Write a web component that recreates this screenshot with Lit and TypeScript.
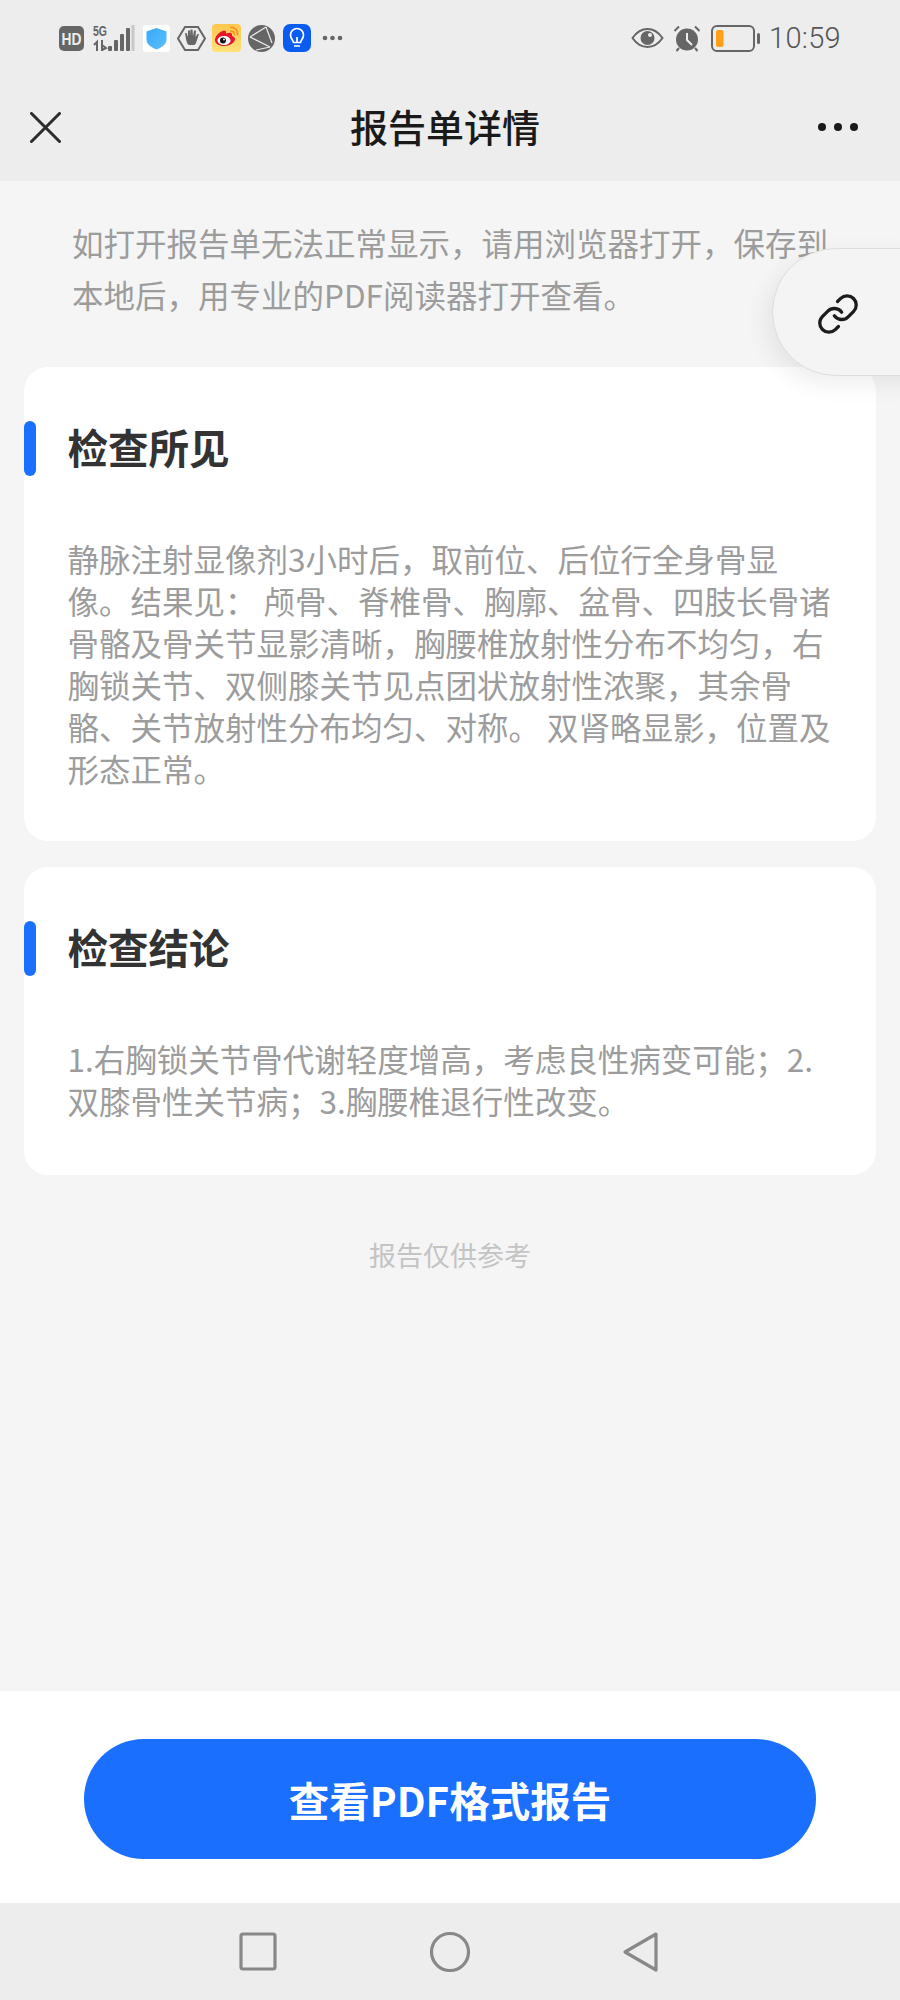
import { LitElement, html, css } from "lit";
import { customElement } from "lit/decorators.js";

const G = "#666";

@customElement("app-root")
export class AppRoot extends LitElement {
  static styles = css`
    :host { display: block; width: 900px; height: 2000px; font-family: "Noto Sans CJK SC", "Noto Sans", sans-serif; }
    .page { position: relative; width: 900px; height: 2000px; display: flex; flex-direction: column; background: #f5f5f5; overflow: hidden; }
    .top { background: #ededed; height: 181px; flex: none; display: flex; flex-direction: column; }
    .status { height: 76px; display: flex; align-items: center; padding: 0 59px 0 59px; }
    .status svg { display: block; flex: none; overflow: visible; }
    .left { display: flex; align-items: center; }
    .right { margin-left: auto; display: flex; align-items: center; }
    .time { font-family: Roboto, sans-serif; font-weight: 300; font-size: 29px; color: #555; margin-left: 9px; line-height: 1; letter-spacing: 0.3px; }
    .bar { flex: 1; display: flex; align-items: center; justify-content: space-between; padding: 0 42px 0 30px; position: relative; margin-top: -3px; }
    .title { position: absolute; left: 0; right: 10px; top: 34px; text-align: center; font-size: 38px; font-weight: 500; color: #1a1a1a; line-height: 1; }
    .bar svg { display: block; }
    .main { flex: 1; display: flex; flex-direction: column; padding: 0 24px; }
    .notice { margin: 35px 0 0; padding: 0 40px 0 48px; font-size: 31.5px; line-height: 52px; color: #9c9c9c; }
    .card { background: #fff; border-radius: 24px; padding: 54px 40.500px 0 43.500px; margin-top: 47px; position: relative; }
    .card + .card { margin-top: 26px; }
    .mark { position: absolute; left: 0; top: 54px; width: 12px; height: 55px; border-radius: 6px; background: #1a6fff; }
    .card h2 { margin: 0; font-size: 40.5px; font-weight: 700; line-height: 52px; color: #333; }
    .card p { margin: 0; font-size: 31.5px; line-height: 42px; color: #9c9c9c; }
    .c1 p { padding: 64px 0 52px; }
    .c2 p { padding: 64px 0 54px; }
    .ref { text-align: center; font-size: 27px; line-height: 36px; color: #c4c4c4; margin-top: 62px; }
    .foot { flex: none; height: 212px; background: #fff; display: flex; align-items: center; justify-content: center; }
    .btn { width: 732px; height: 120px; border-radius: 60px; background: #1a6fff; color: #fff; font-size: 40.5px; font-weight: 700; display: flex; align-items: center; justify-content: center; margin-top: 4px; }
    .nav { flex: none; height: 97px; background: #ededed; display: flex; align-items: center; justify-content: center; padding-left: 10px; }
    .nav svg { display: block; }
    .float { position: absolute; left: 772px; top: 248px; width: 200px; height: 128px; box-sizing: border-box; border-radius: 64px; background: #f4f4f4; border: 1.5px solid #ddd; box-shadow: -6px 8px 24px rgba(0,0,0,.07); display: flex; align-items: center; padding: 4px 0 0 42.500px; }
  `;

  icons() {
    return html`
      <div class="left">
        <svg width="25" height="25" viewBox="0 0 25 25"><rect width="25" height="25" rx="5" fill="${G}"/><text x="2.500" y="18.500" font-family="Liberation Sans" font-weight="700" font-size="17" fill="#ededed" textLength="20" lengthAdjust="spacingAndGlyphs">HD</text></svg>
        <svg style="margin-left:9px" width="42" height="28" viewBox="0 0 42 28"><text x="0" y="12" font-family="Liberation Sans" font-weight="700" font-size="15" fill="${G}" textLength="14" lengthAdjust="spacingAndGlyphs">5G</text><path d="M1 21l3-3v9M4 18v9" stroke="${G}" stroke-width="2" fill="none"/><path d="M9 16v11M9 21l4 3-4 2" stroke="${G}" stroke-width="2" fill="none"/><rect x="15" y="22" width="4" height="5" rx="1" fill="${G}"/><rect x="21" y="16" width="4" height="11" rx="1" fill="${G}"/><rect x="27" y="10" width="4" height="17" rx="1" fill="${G}"/><rect x="33" y="4" width="4" height="23" rx="1" fill="${G}"/><rect x="38.500" y="1" width="3" height="26" fill="#c8c8c8"/></svg>
        <svg style="margin-left:8px" width="27" height="27" viewBox="0 0 27 27"><defs><linearGradient id="sh" x1="0" y1="0" x2="1" y2="1"><stop offset="0" stop-color="#36a8f8"/><stop offset="1" stop-color="#5cc0fb"/></linearGradient></defs><rect width="27" height="27" rx="3" fill="#fff"/><path d="M13.500 3l10 3.500v8c0 5-5 8-10 10-5-2-10-5-10-10v-8z" fill="url(#sh)"/></svg>
        <svg style="margin-left:7px" width="29" height="27" viewBox="0 0 29 27"><path d="M8 2h13l7 11.500-7 11.500H8L1 13.500z" fill="none" stroke="${G}" stroke-width="2"/><path d="M9 14l-1-6h1.500l1.500 4V5.500h2V11l.5-6.500h2L16 11l1-5.500h2L18.500 12l2-3h1.500l-3 9c-.5 1.500-1.500 2-3 2h-3c-2 0-3-1-4-6z" fill="${G}"/></svg>
        <svg style="margin-left:6px" width="29" height="28" viewBox="0 0 29 28"><defs><linearGradient id="wb" x1="0" y1="0" x2="0" y2="1"><stop offset="0" stop-color="#ffc64d"/><stop offset="1" stop-color="#ffe27a"/></linearGradient></defs><rect width="29" height="28" rx="4" fill="url(#wb)"/><path d="M3 16c0-4 5-9 9-9.500 2 0 2.500 1.500 2 3 3-1 6-1 6 1 0 1 0 1.500 0 1.500 2 .5 3 1.500 3 3 0 3.500-5 7-11 7-5.500 0-9-2.500-9-6z" fill="#e6162d"/><ellipse cx="12" cy="16.500" rx="6.500" ry="4.500" fill="#fff"/><circle cx="11" cy="16.500" r="3" fill="#111"/><circle cx="12" cy="15.500" r=".9" fill="#fff"/><path d="M18 7c3-.5 5 1.500 4.500 4.500M18 3.500c5-.8 8.500 3 7.500 8" fill="none" stroke="#f7921e" stroke-width="1.500"/></svg>
        <svg style="margin-left:7px" width="27" height="27" viewBox="0 0 27 27"><circle cx="13.500" cy="13.500" r="13.500" fill="${G}"/><path d="M2 12L18 2M18 2l6 16M2 12l20 10M8 25l14-3" fill="none" stroke="#ededed" stroke-width="1.200"/></svg>
        <svg style="margin-left:8px" width="28" height="28" viewBox="0 0 28 28"><rect width="28" height="28" rx="7" fill="#0a5cf0"/><path d="M10.500 18.500c0-2-3-3.500-3-7.500a6.500 6.500 0 0 1 13 0c0 4-3 5.500-3 7.500zM11 22h6M14 18v-5" fill="none" stroke="#fff" stroke-width="1.700"/></svg>
        <svg style="margin-left:11px" width="21" height="6" viewBox="0 0 21 6"><circle cx="3" cy="3" r="2.300" fill="${G}"/><circle cx="10.500" cy="3" r="2.300" fill="${G}"/><circle cx="18" cy="3" r="2.300" fill="${G}"/></svg>
      </div>
      <div class="right">
        <svg width="33" height="22" viewBox="0 0 33 22"><path d="M1.500 11C6 4.500 11 2 16.500 2S27 4.500 31.500 11C27 17.500 22 20 16.500 20S6 17.500 1.500 11z" fill="none" stroke="${G}" stroke-width="2"/><circle cx="16.500" cy="11" r="7" fill="${G}"/><circle cx="19" cy="8" r="2" fill="#ededed"/></svg>
        <svg style="margin-left:9px" width="28" height="27" viewBox="0 0 28 27"><circle cx="14" cy="14.500" r="11" fill="${G}"/><path d="M14 8v7l5 5" fill="none" stroke="#ededed" stroke-width="2"/><path d="M1.500 6L6 1.500M26.500 6L22 1.500M6 23l-2.500 3M22 23l2.500 3" stroke="${G}" stroke-width="2"/></svg>
        <svg style="margin-left:10px" width="49" height="27" viewBox="0 0 49 27"><rect x="1" y="1" width="42" height="25" rx="5" fill="none" stroke="${G}" stroke-width="2"/><rect x="5" y="5" width="7.500" height="17" rx="2" fill="#ff9f1a"/><rect x="46" y="8" width="3" height="11" rx="1.500" fill="${G}"/></svg>
        <span class="time">10:59</span>
      </div>`;
  }

  render() {
    return html`
      <div class="page">
        <div class="top">
          <div class="status">${this.icons()}</div>
          <div class="bar">
            <span class="title">报告单详情</span>
            <svg width="31" height="31" viewBox="0 0 31 31"><path d="M1.500 1.500l28 28M29.500 1.500l-28 28" stroke="#2b2b2b" stroke-width="3" stroke-linecap="round"/></svg>
            <svg width="40" height="8" viewBox="0 0 40 8"><circle cx="4" cy="4" r="4" fill="#1a1a1a"/><circle cx="20" cy="4" r="4" fill="#1a1a1a"/><circle cx="36" cy="4" r="4" fill="#1a1a1a"/></svg>
          </div>
        </div>
        <div class="main">
          <div class="notice">如打开报告单无法正常显示，请用浏览器打开，保存到本地后，用专业的PDF阅读器打开查看。</div>
          <section class="card c1">
            <i class="mark"></i>
            <h2>检查所见</h2>
            <p>静脉注射显像剂3小时后，取前位、后位行全身骨显像。结果见： 颅骨、脊椎骨、胸廓、盆骨、四肢长骨诸骨骼及骨关节显影清晰，胸腰椎放射性分布不均匀，右胸锁关节、双侧膝关节见点团状放射性浓聚，其余骨骼、关节放射性分布均匀、对称。 双肾略显影，位置及形态正常。</p>
          </section>
          <section class="card c2">
            <i class="mark"></i>
            <h2>检查结论</h2>
            <p>1.右胸锁关节骨代谢轻度增高，考虑良性病变可能；2.双膝骨性关节病；3.胸腰椎退行性改变。</p>
          </section>
          <div class="ref">报告仅供参考</div>
        </div>
        <div class="foot"><div class="btn">查看PDF格式报告</div></div>
        <div class="nav">
          <svg width="432" height="42" viewBox="0 0 432 42"><rect x="2" y="3" width="34" height="35" rx="2" fill="none" stroke="#888" stroke-width="3.200"/><circle cx="211" cy="21" r="18.500" fill="none" stroke="#888" stroke-width="3.200"/><path d="M417 3L386 21l31 18z" fill="none" stroke="#888" stroke-width="3.200" stroke-linejoin="round"/></svg>
        </div>
        <div class="float">
          <svg width="44" height="44" viewBox="0 0 24 24"><g fill="none" stroke="#1c1c1c" stroke-width="1.800" stroke-linecap="round" stroke-linejoin="round"><path d="M10 13a5 5 0 0 0 7.540.54l3-3a5 5 0 0 0-7.070-7.070l-1.720 1.710"/><path d="M14 11a5 5 0 0 0-7.540-.54l-3 3a5 5 0 0 0 7.070 7.070l1.710-1.710"/></g></svg>
        </div>
      </div>`;
  }
}
